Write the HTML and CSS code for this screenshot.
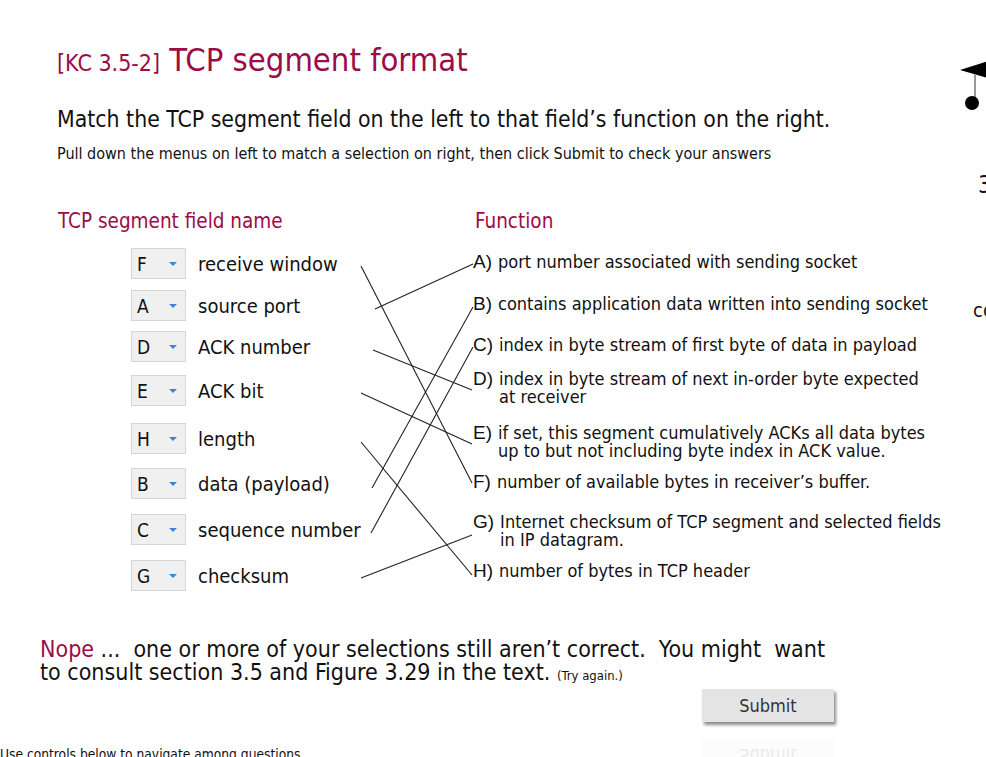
FILE: index.html
```html
<!DOCTYPE html>
<html lang="en">
  <head>
    <meta charset="UTF-8" />
    <meta name="viewport" content="width=device-width, initial-scale=1.0" />
    <title>[KC 3.5-2] TCP segment format</title>
    <link rel="stylesheet" href="styles.css">
  </head>
  <body>
    <div class="page">
      <div class="main">
        <h1 class="title"><span class="title-code">[KC 3.5-2]</span> TCP segment format</h1>
        <p class="prompt">Match the TCP segment field on the left to that field’s function on the right.</p>
        <p class="hint">Pull down the menus on left to match a selection on right, then click Submit to check your answers</p>

        <div class="match">
          <!-- connector lines, coordinates relative to .match -->
          <svg class="links" width="900" height="400" viewBox="0 0 900 400">
            <line x1="304" y1="65" x2="415" y2="282" />
            <line x1="318" y1="108" x2="416" y2="63" />
            <line x1="316" y1="149" x2="415" y2="189" />
            <line x1="304" y1="192" x2="415" y2="243" />
            <line x1="304" y1="241" x2="415" y2="374" />
            <line x1="315" y1="287" x2="416" y2="106" />
            <line x1="314" y1="332" x2="416" y2="146" />
            <line x1="304" y1="377" x2="415" y2="334" />
          </svg>

          <div class="fields">
            <h2 class="col-head">TCP segment field name</h2>
            <div class="field-rows">
              <div class="field"><div class="pick">F<span class="caret"></span></div>receive window</div>
              <div class="field"><div class="pick">A<span class="caret"></span></div>source port</div>
              <div class="field"><div class="pick">D<span class="caret"></span></div>ACK number</div>
              <div class="field"><div class="pick">E<span class="caret"></span></div>ACK bit</div>
              <div class="field"><div class="pick">H<span class="caret"></span></div>length</div>
              <div class="field"><div class="pick">B<span class="caret"></span></div>data (payload)</div>
              <div class="field"><div class="pick">C<span class="caret"></span></div>sequence number</div>
              <div class="field"><div class="pick">G<span class="caret"></span></div>checksum</div>
            </div>
          </div>

          <div class="functions">
            <h2 class="col-head">Function</h2>
            <div class="func-rows">
              <div class="func"><span class="key">A)</span><span>port number associated with sending socket</span></div>
              <div class="func"><span class="key">B)</span><span>contains application data written into sending socket</span></div>
              <div class="func"><span class="key">C)</span><span>index in byte stream of first byte of data in payload</span></div>
              <div class="func"><span class="key">D)</span><span>index in byte stream of next in-order byte expected<br>at receiver</span></div>
              <div class="func"><span class="key">E)</span><span>if set, this segment cumulatively ACKs all data bytes<br>up to but not including byte index in ACK value.</span></div>
              <div class="func"><span class="key">F)</span><span>number of available bytes in receiver’s buffer.</span></div>
              <div class="func"><span class="key">G)</span><span>Internet checksum of TCP segment and selected fields<br>in IP datagram.</span></div>
              <div class="func"><span class="key">H)</span><span>number of bytes in TCP header</span></div>
            </div>
          </div>
        </div>

        <p class="feedback"><span class="nope">Nope</span> ...&nbsp; one or more of your selections still aren’t correct.&nbsp; You might&nbsp; want<br>to consult section 3.5 and Figure 3.29 in the text. <small>(Try again.)</small></p>

        <div class="actions">
          <button class="submit">Submit</button>
          <div class="submit ghost" aria-hidden="true">Submit</div>
        </div>

        <p class="nav-note">Use controls below to navigate among questions</p>
      </div>

      <aside class="side">
        <svg class="cap" width="30" height="60" viewBox="0 0 30 60">
          <polygon points="2,12 30,3 30,20" fill="#000" />
          <line x1="17" y1="16" x2="17" y2="40" stroke="#999" stroke-width="2" />
          <circle cx="14" cy="45" r="7" fill="#000" />
        </svg>
        <div class="side-num">3</div>
        <div class="side-word">co</div>
      </aside>
    </div>
  </body>
</html>
```

FILE: styles.css
```css
body {
  margin: 0;
  overflow: hidden;
  font-family: "DejaVu Sans Condensed", "DejaVu Sans", sans-serif;
  color: #111;
  background: #fff;
}

.page {
  display: flex;
  width: 986px;
  height: 757px;
  overflow: hidden;
}

.main {
  flex: 0 0 958px;
}

.title {
  margin: 40px 0 0 57px;
  font-size: 32.5px;
  font-weight: normal;
  line-height: 40px;
  color: #9c0c47;
}

.title-code {
  font-size: 23px;
}

.prompt {
  margin: 22px 0 0 57px;
  font-size: 22.8px;
  line-height: 28px;
}

.hint {
  margin: 12px 0 0 57px;
  font-size: 16px;
  line-height: 18px;
}

/* matching area */
.match {
  position: relative;
  display: flex;
  margin: 38px 0 0 57px;
  height: 400px;
}

.links {
  position: absolute;
  left: 0;
  top: 0;
}

.links line {
  stroke: #222;
  stroke-width: 1.1;
}

.col-head {
  margin: 8px 0 0;
  font-size: 20.5px;
  font-weight: normal;
  line-height: 24px;
  color: #9c0c47;
}

.fields {
  flex: 0 0 416px;
}

.fields .col-head {
  margin-left: 1px;
}

.field-rows {
  display: grid;
  grid-template-rows: 42px 41px 44px 48px 45px 46px 46px 31px;
  margin: 15px 0 0 74px;
}

.field {
  display: flex;
  align-items: center;
  gap: 12px;
  height: 31px;
  font-size: 20px;
}

.pick {
  position: relative;
  box-sizing: border-box;
  width: 55px;
  height: 31px;
  padding: 3px 0 0 5px;
  background: #f0f0f0;
  border: 1px solid #d6d6d6;
  font-size: 19px;
  line-height: 24px;
}

.caret {
  position: absolute;
  right: 8px;
  top: 13px;
  border-left: 4px solid transparent;
  border-right: 4px solid transparent;
  border-top: 4px solid #3a86d4;
}

.functions .col-head {
  margin-left: 2px;
}

.func-rows {
  display: grid;
  grid-template-rows: 42px 41px 34px 54px 49px 40px 49px auto;
  margin-top: 20px;
}

.func {
  display: flex;
  gap: 6px;
  font-size: 18px;
  line-height: 18px;
}

.key {
  font-family: "Liberation Sans", sans-serif;
  font-size: 19px;
}

/* result + actions */
.feedback {
  margin: 37px 0 0 40px;
  font-size: 23px;
  line-height: 23px;
}

.nope {
  color: #9c0c47;
}

.feedback small {
  font-size: 13px;
}

.actions {
  display: flex;
  flex-direction: column;
  align-items: flex-start;
  height: 40px;
  margin: 2px 0 0 702px;
}

.submit {
  flex: none;
  box-sizing: border-box;
  width: 132px;
  height: 33px;
  padding: 0;
  border: 0;
  background: #e4e4e4;
  box-shadow: 2px 3px 3px rgba(0, 0, 0, 0.45);
  font-family: inherit;
  font-size: 18px;
  line-height: 33px;
  text-align: center;
  color: #333;
}

.ghost {
  margin-top: 17px;
  transform: scaleY(-1);
  opacity: 0.1;
  box-shadow: none;
}

.nav-note {
  margin: 17px 0 0 0;
  font-size: 13.7px;
  line-height: 16px;
}

/* cut-off side panel */
.side {
  flex: 0 0 40px;
}

.cap {
  display: block;
  margin: 58px 0 0 0;
}

.side-num {
  margin: 53px 0 0 20px;
  font-size: 24px;
}

.side-word {
  margin: 99px 0 0 15px;
  font-size: 20px;
}
```
